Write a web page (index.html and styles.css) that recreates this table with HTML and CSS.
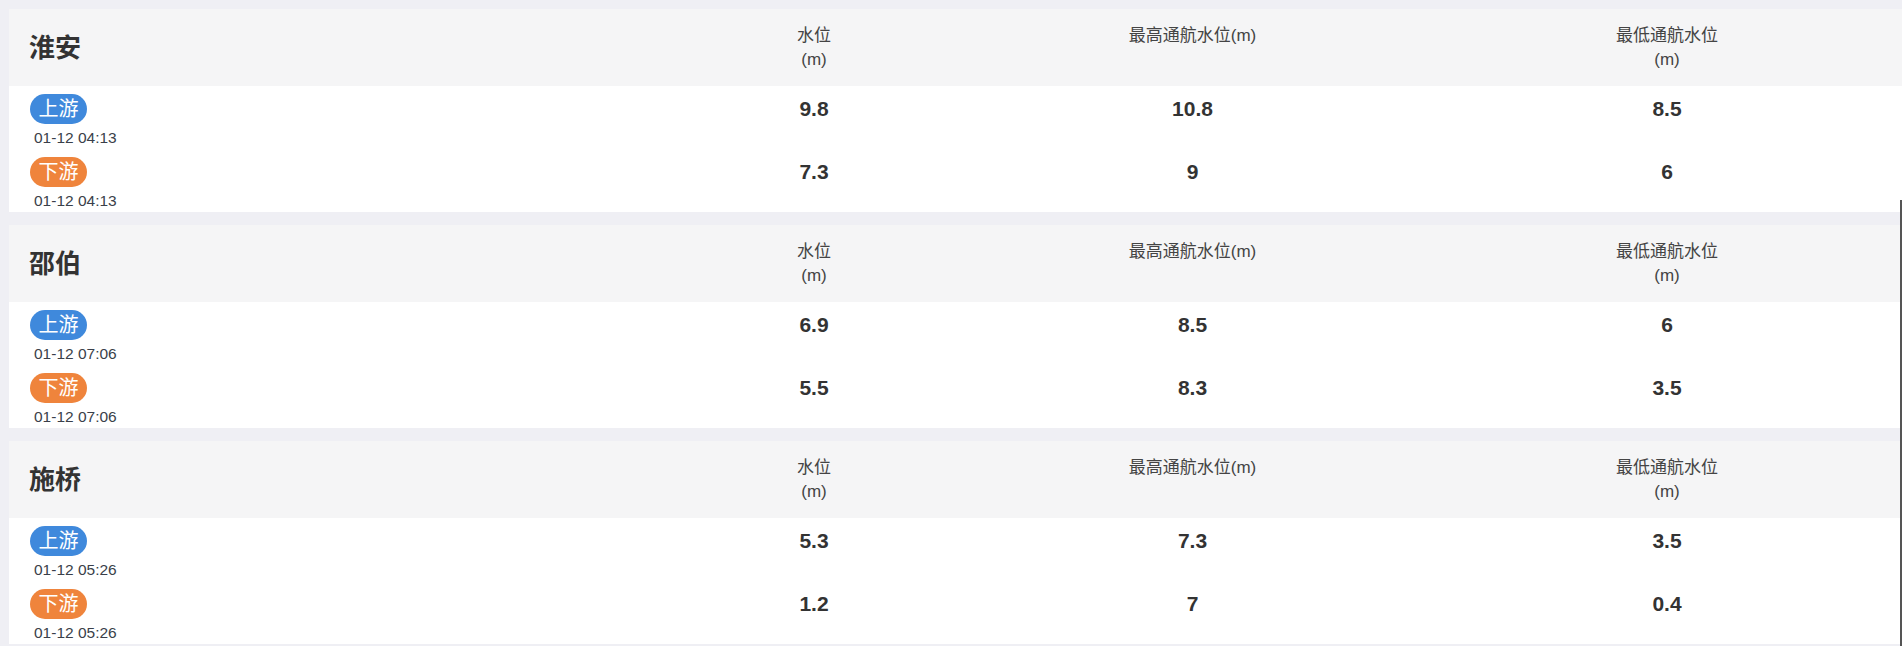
FILE: index.html
```html
<!DOCTYPE html>
<html lang="zh-CN">
<head>
<meta charset="utf-8">
<title>水位</title>
<link rel="stylesheet" href="styles.css">
</head>
<body>
<div class="page">
  <section class="card">
    <div class="card-head">
      <div class="title">淮安</div>
      <div class="hcell">水位<br>(m)</div>
      <div class="hcell">最高通航水位(m)</div>
      <div class="hcell">最低通航水位<br>(m)</div>
    </div>
    <div class="row">
      <div class="station"><span class="badge up">上游</span><span class="time">01-12 04:13</span></div>
      <div class="val">9.8</div>
      <div class="val">10.8</div>
      <div class="val">8.5</div>
    </div>
    <div class="row">
      <div class="station"><span class="badge down">下游</span><span class="time">01-12 04:13</span></div>
      <div class="val">7.3</div>
      <div class="val">9</div>
      <div class="val">6</div>
    </div>
  </section>
  <section class="card">
    <div class="card-head">
      <div class="title">邵伯</div>
      <div class="hcell">水位<br>(m)</div>
      <div class="hcell">最高通航水位(m)</div>
      <div class="hcell">最低通航水位<br>(m)</div>
    </div>
    <div class="row">
      <div class="station"><span class="badge up">上游</span><span class="time">01-12 07:06</span></div>
      <div class="val">6.9</div>
      <div class="val">8.5</div>
      <div class="val">6</div>
    </div>
    <div class="row">
      <div class="station"><span class="badge down">下游</span><span class="time">01-12 07:06</span></div>
      <div class="val">5.5</div>
      <div class="val">8.3</div>
      <div class="val">3.5</div>
    </div>
  </section>
  <section class="card">
    <div class="card-head">
      <div class="title">施桥</div>
      <div class="hcell">水位<br>(m)</div>
      <div class="hcell">最高通航水位(m)</div>
      <div class="hcell">最低通航水位<br>(m)</div>
    </div>
    <div class="row">
      <div class="station"><span class="badge up">上游</span><span class="time">01-12 05:26</span></div>
      <div class="val">5.3</div>
      <div class="val">7.3</div>
      <div class="val">3.5</div>
    </div>
    <div class="row">
      <div class="station"><span class="badge down">下游</span><span class="time">01-12 05:26</span></div>
      <div class="val">1.2</div>
      <div class="val">7</div>
      <div class="val">0.4</div>
    </div>
  </section>
</div>
<div class="scroll-thumb"></div>
</body>
</html>
```
FILE: styles.css
```css
html, body {
  margin: 0;
  padding: 0;
  background: #efeff4;
  overflow: hidden;
}
body {
  font-family: "Liberation Sans", "Noto Sans CJK SC", sans-serif;
  color: #333;
}
.page {
  padding: 9px 0 0 9px;
  display: flex;
  flex-direction: column;
  gap: 13px;
}
.card {
  width: 1893px;
  background: #fff;
}
.card-head,
.row {
  display: grid;
  grid-template-columns: 666px 278px 479px 470px;
}
.card-head {
  background: #f5f5f6;
  height: 77px;
  box-sizing: border-box;
  padding: 14.5px 0;
  align-items: start;
}
.title {
  align-self: center;
  padding-left: 20px;
  font-size: 26px;
  font-weight: bold;
  line-height: 30px;
  color: #333;
}
.hcell {
  text-align: center;
  font-size: 17px;
  line-height: 24px;
  color: #444;
}
.row {
  height: 63px;
  box-sizing: border-box;
  padding-top: 7.5px;
  align-items: baseline;
}
.station {
  display: flex;
  flex-direction: column;
  align-items: flex-start;
  padding-left: 21px;
}
.badge {
  display: inline-flex;
  align-items: center;
  height: 30px;
  padding: 0 8.5px;
  border-radius: 15px;
  color: #fff;
  font-size: 20px;
  line-height: 30px;
  margin-bottom: 5.5px;
}
.badge.up {
  background: #3f89dc;
}
.badge.down {
  background: #ef843c;
}
.time {
  padding-left: 4px;
  font-size: 15.5px;
  line-height: 18px;
  color: #3a3f4a;
}
.val {
  text-align: center;
  font-size: 21px;
  font-weight: bold;
  color: #333;
}
.scroll-thumb {
  position: fixed;
  right: 0;
  top: 200px;
  bottom: 0;
  width: 2px;
  background: #555;
}
```
